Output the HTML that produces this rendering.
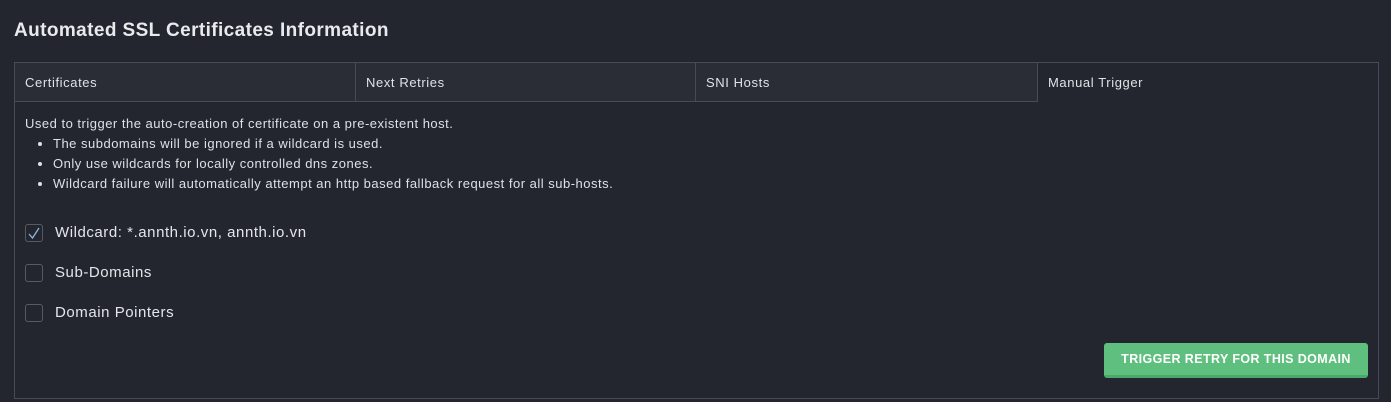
<!DOCTYPE html>
<html><head><style>
body{margin:0;width:1391px;height:402px;background:#23262e;font-family:"Liberation Sans",sans-serif;color:#e6e8ec;position:relative;overflow:hidden}
h1{position:absolute;left:14px;top:20px;margin:0;font-size:19px;font-weight:bold;color:#e8eaee;letter-spacing:0.4px}
.box{position:absolute;left:14px;top:62px;width:1363px;height:335px;border:1px solid #474b55}
.tab{position:absolute;top:0;height:39px;background:#2a2d36;border-bottom:1px solid #474b55;border-right:1px solid #474b55;font-size:13px;line-height:39px;padding-left:10px;box-sizing:border-box;color:#dfe2e7;letter-spacing:0.6px}
.tab.act{background:#23262e;border-bottom:none;border-right:none}
.txt{position:absolute;left:10px;top:51px;font-size:13px;line-height:20px;color:#dde0e5;letter-spacing:0.5px}
ul{margin:0;padding-left:28px}
.cb{position:absolute;left:10px;width:18px;height:18px;border:1px solid #555a64;border-radius:3px;box-sizing:border-box}
.lbl{position:absolute;left:40px;font-size:15px;color:#e4e6ea;letter-spacing:0.55px}
.btn{position:absolute;left:1089px;top:280px;width:264px;height:35px;background:#5fbf7f;border-bottom:3px solid #4aa96a;border-radius:3px;box-sizing:border-box;color:#fff;font-weight:bold;font-size:12.5px;text-align:center;line-height:33px;letter-spacing:0.4px}
</style></head><body>
<h1>Automated SSL Certificates Information</h1>
<div class="box">
<div class="tab" style="left:0;width:341px">Certificates</div>
<div class="tab" style="left:341px;width:340px">Next Retries</div>
<div class="tab" style="left:681px;width:342px">SNI Hosts</div>
<div class="tab act" style="left:1023px;width:340px">Manual Trigger</div>
<div class="txt">Used to trigger the auto-creation of certificate on a pre-existent host.
<ul><li>The subdomains will be ignored if a wildcard is used.</li><li>Only use wildcards for locally controlled dns zones.</li><li>Wildcard failure will automatically attempt an http based fallback request for all sub-hosts.</li></ul></div>
<div class="cb" style="top:161px"><svg width="18" height="18" style="position:absolute;left:-1px;top:-1px"><path d="M4 10 L7.5 14 L14 4" fill="none" stroke="#8fb4e0" stroke-width="1.3"/></svg></div>
<div class="lbl" style="top:161px">Wildcard: *.annth.io.vn, annth.io.vn</div>
<div class="cb" style="top:201px"></div>
<div class="lbl" style="top:201px">Sub-Domains</div>
<div class="cb" style="top:241px"></div>
<div class="lbl" style="top:241px">Domain Pointers</div>
<div class="btn">TRIGGER RETRY FOR THIS DOMAIN</div>
</div>
</body></html>
